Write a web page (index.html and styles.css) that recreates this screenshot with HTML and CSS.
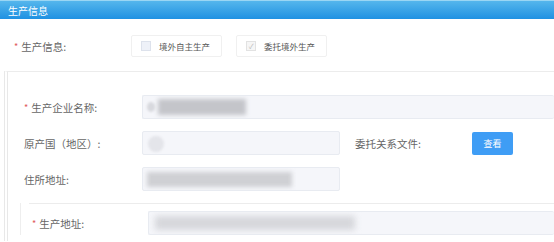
FILE: index.html
```html
<!doctype html>
<html lang="zh-cn">
<head>
<title>生产信息</title>
<meta charset="UTF-8">
<link rel="stylesheet" href="styles.css">
</head>
<body>
    <div class="hd">生产信息</div>
    <div class="row top">
        <div class="lab"><i>*</i>生产信息:</div>
        <label class="chk"><span class="box"></span>境外自主生产</label>
        <label class="chk on"><span class="box">&#10003;</span>委托境外生产</label>
    </div>
    <div class="panel">
        <div class="row">
            <div class="lab"><i>*</i>生产企业名称:</div>
            <div class="ipt wide"><span class="dot"></span><span class="mask m1"></span></div>
        </div>
        <div class="row">
            <div class="lab">原产国（地区）:</div>
            <div class="ipt"><span class="dot big"></span></div>
            <div class="lab2">委托关系文件:</div>
            <a class="btn">查看</a>
        </div>
        <div class="row">
            <div class="lab">住所地址:</div>
            <div class="ipt"><span class="mask m2"></span></div>
        </div>
        <div class="sub">
            <div class="row">
                <div class="lab"><i>*</i>生产地址:</div>
                <div class="ipt wide"><span class="mask m3"></span></div>
            </div>
        </div>
    </div>
</body>
</html>
```

FILE: styles.css
```css
html,body{overflow:hidden;}
body{margin:0;width:554px;height:242px;background:#fff;font-family:"Noto Sans CJK SC","Liberation Sans",sans-serif;color:#666;font-size:10.5px;}
.hd{height:18px;line-height:20px;padding-left:8px;color:#fff;font-size:10px;border-top:1px solid #9ad6f4;background:linear-gradient(#55b6ec,#1f91e2);}
.row{display:flex;align-items:center;height:24px;}
.row.top{margin-top:16px;height:22px;padding-left:14px;}
.top .lab{width:117px;}
.lab i{color:#e05a5a;font-style:normal;font-size:9px;margin-right:3px;vertical-align:1px;}
.chk{display:flex;align-items:center;height:20px;border:1px solid #f0f0f0;border-radius:2px;padding:0 11px 0 9px;margin-right:14px;font-size:8.5px;color:#555;}
.chk .box{width:8px;height:8px;border:1px solid #dde2ec;background:#eef1f8;margin-right:8px;font-size:7px;line-height:8px;text-align:center;color:#bbb;}
.chk.on .box{background:#f6f6f6;border-color:#e2e2e2;}
.panel{margin:14px 0 0 4px;border-top:1px solid #ececec;border-left:4px double #e8e8e8;padding:23px 0 0 16px;height:146px;}
.panel .row{margin-bottom:12px;}
.panel .lab{width:118px;}
.ipt{position:relative;width:196px;height:22px;border:1px solid #e8ebf1;border-radius:2px;background:#f5f6fa;overflow:hidden;}
.ipt.wide{flex:1;border-right:none;}
.lab2{width:117px;margin-left:15px;}
.btn{width:41px;height:23px;line-height:23px;text-align:center;background:#3f9df5;color:#fff;border-radius:2px;font-size:9px;}
.mask{position:absolute;background:#c4c5ca;filter:blur(2px);}
.m1{left:15px;top:3px;width:88px;height:16px;}
.m2{left:4px;top:4px;width:145px;height:15px;background:#cfd0d4;}
.m3{left:6px;top:4px;width:200px;height:14px;background:#d6d7db;filter:blur(3px);}
.dot{position:absolute;left:4px;top:6px;width:8px;height:10px;border-radius:50%;background:#d8d9de;filter:blur(1px);}
.dot.big{left:5px;top:4px;width:16px;height:16px;background:#e4e5ea;}
.sub{margin:2px 0 0 -4px;border-left:1px solid #eeeeee;padding:8px 0 0 11px;position:relative;}
.sub:before{content:"";position:absolute;left:8px;right:0;top:0;border-top:1px solid #ececec;}
.sub .lab{width:116px;}
```
